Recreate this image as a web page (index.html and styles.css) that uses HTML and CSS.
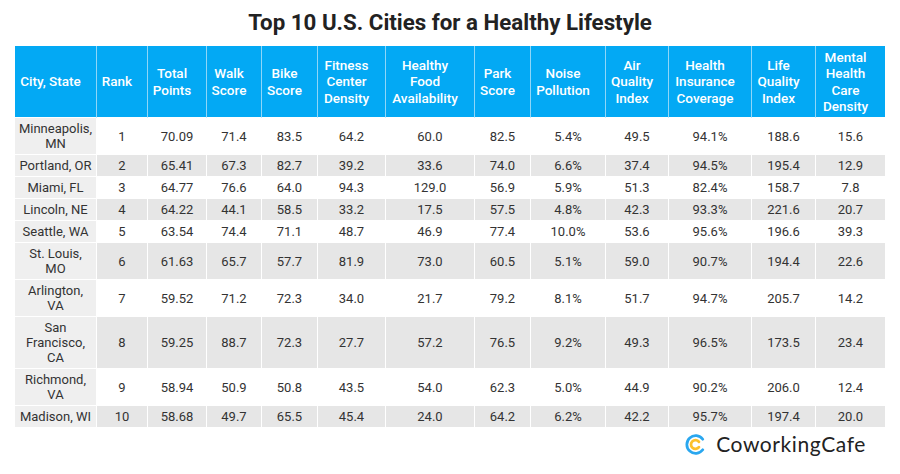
FILE: index.html
```html
<!DOCTYPE html>
<html lang="en">
<head>
<meta charset="utf-8">
<title>Top 10 U.S. Cities for a Healthy Lifestyle</title>
<link rel="stylesheet" href="styles.css">
</head>
<body>
<div class="page">
  <h1 class="title">Top 10 U.S. Cities for a Healthy Lifestyle</h1>
  <table class="data">
    <colgroup>
      <col class="c-city"><col class="c-rank"><col class="c-total"><col class="c-walk"><col class="c-bike"><col class="c-fit"><col class="c-food"><col class="c-park"><col class="c-noise"><col class="c-air"><col class="c-ins"><col class="c-life"><col class="c-mental">
    </colgroup>
    <thead>
      <tr>
        <th>City, State</th><th>Rank</th><th>Total<br>Points</th><th>Walk<br>Score</th><th>Bike<br>Score</th><th>Fitness<br>Center<br>Density</th><th>Healthy<br>Food<br>Availability</th><th>Park<br>Score</th><th>Noise<br>Pollution</th><th>Air<br>Quality<br>Index</th><th>Health<br>Insurance<br>Coverage</th><th>Life<br>Quality<br>Index</th><th>Mental<br>Health<br>Care<br>Density</th>
      </tr>
    </thead>
    <tbody>
      <tr class="odd"><td>Minneapolis,<br>MN</td><td>1</td><td>70.09</td><td>71.4</td><td>83.5</td><td>64.2</td><td>60.0</td><td>82.5</td><td>5.4%</td><td>49.5</td><td>94.1%</td><td>188.6</td><td>15.6</td></tr>
      <tr class="even"><td>Portland, OR</td><td>2</td><td>65.41</td><td>67.3</td><td>82.7</td><td>39.2</td><td>33.6</td><td>74.0</td><td>6.6%</td><td>37.4</td><td>94.5%</td><td>195.4</td><td>12.9</td></tr>
      <tr class="odd"><td>Miami, FL</td><td>3</td><td>64.77</td><td>76.6</td><td>64.0</td><td>94.3</td><td>129.0</td><td>56.9</td><td>5.9%</td><td>51.3</td><td>82.4%</td><td>158.7</td><td>7.8</td></tr>
      <tr class="even"><td>Lincoln, NE</td><td>4</td><td>64.22</td><td>44.1</td><td>58.5</td><td>33.2</td><td>17.5</td><td>57.5</td><td>4.8%</td><td>42.3</td><td>93.3%</td><td>221.6</td><td>20.7</td></tr>
      <tr class="odd"><td>Seattle, WA</td><td>5</td><td>63.54</td><td>74.4</td><td>71.1</td><td>48.7</td><td>46.9</td><td>77.4</td><td>10.0%</td><td>53.6</td><td>95.6%</td><td>196.6</td><td>39.3</td></tr>
      <tr class="even"><td>St. Louis,<br>MO</td><td>6</td><td>61.63</td><td>65.7</td><td>57.7</td><td>81.9</td><td>73.0</td><td>60.5</td><td>5.1%</td><td>59.0</td><td>90.7%</td><td>194.4</td><td>22.6</td></tr>
      <tr class="odd"><td>Arlington,<br>VA</td><td>7</td><td>59.52</td><td>71.2</td><td>72.3</td><td>34.0</td><td>21.7</td><td>79.2</td><td>8.1%</td><td>51.7</td><td>94.7%</td><td>205.7</td><td>14.2</td></tr>
      <tr class="even"><td>San<br>Francisco,<br>CA</td><td>8</td><td>59.25</td><td>88.7</td><td>72.3</td><td>27.7</td><td>57.2</td><td>76.5</td><td>9.2%</td><td>49.3</td><td>96.5%</td><td>173.5</td><td>23.4</td></tr>
      <tr class="odd"><td>Richmond,<br>VA</td><td>9</td><td>58.94</td><td>50.9</td><td>50.8</td><td>43.5</td><td>54.0</td><td>62.3</td><td>5.0%</td><td>44.9</td><td>90.2%</td><td>206.0</td><td>12.4</td></tr>
      <tr class="even"><td>Madison, WI</td><td>10</td><td>58.68</td><td>49.7</td><td>65.5</td><td>45.4</td><td>24.0</td><td>64.2</td><td>6.2%</td><td>42.2</td><td>95.7%</td><td>197.4</td><td>20.0</td></tr>
    </tbody>
  </table>
  <div class="footer">
    <div class="brand">
      <svg class="brand-icon" width="21" height="21" viewBox="0 0 20 20" aria-hidden="true">
        <path d="M16.9 5.0 A8.4 8.4 0 1 0 16.9 15.0" fill="none" stroke="#2aa7ef" stroke-width="2.6" stroke-linecap="round"/>
        <path d="M13.3 7.5 A4.2 4.2 0 1 0 13.3 12.5" fill="none" stroke="#fcc12d" stroke-width="2.6" stroke-linecap="round"/>
      </svg>
      <span class="brand-name">CoworkingCafe</span>
    </div>
  </div>
</div>
</body>
</html>
```

FILE: styles.css
```css
html, body {
  margin: 0;
  padding: 0;
  background: #ffffff;
}

.page {
  width: 900px;
  height: 474px;
  box-sizing: border-box;
  padding: 0 15px;
  font-family: Roboto, "Liberation Sans", sans-serif;
  color: #333333;
}

.title {
  margin: 0;
  height: 46px;
  box-sizing: border-box;
  padding-top: 8px;
  font-size: 22.3px;
  line-height: 28px;
  font-weight: 700;
  text-align: center;
  color: #222222;
}

.data {
  width: 870px;
  table-layout: fixed;
  border-collapse: separate;
  border-spacing: 0;
  font-size: 13px;
}

.c-city { width: 82px; }
.c-rank { width: 51px; }
.c-total { width: 59px; }
.c-walk { width: 55px; }
.c-bike { width: 56px; }
.c-fit { width: 68px; }
.c-food { width: 89px; }
.c-park { width: 56px; }
.c-noise { width: 75px; }
.c-air { width: 63px; }
.c-ins { width: 83px; }
.c-life { width: 64px; }
.c-mental { width: 69px; }

.data th {
  background: #03a9f4;
  color: #ffffff;
  font-size: 13.5px;
  font-weight: 500;
  line-height: 16.5px;
  padding: 2.5px 10px 2.5px 0;
  text-align: center;
  vertical-align: middle;
  height: 66px;
  border-right: 1px solid #8fd6f8;
  border-bottom: 1px solid #ffffff;
  white-space: nowrap;
}

.data th:last-child,
.data td:last-child {
  border-right: none;
}

.data td {
  line-height: 15px;
  padding: 3px 0;
  text-align: center;
  vertical-align: middle;
  border-right: 1px solid #ffffff;
  border-bottom: 1px solid #ffffff;
  white-space: nowrap;
}

.data tr.odd td { background: #ffffff; }
.data tr.even td { background: #e6e6e6; }
.data tr td:first-child { background: #efefef; }

.footer {
  display: flex;
  justify-content: flex-end;
  padding: 5px 19px 0 0;
}

.brand {
  display: flex;
  align-items: center;
  gap: 10px;
}

.brand-icon {
  display: block;
}

.brand-name {
  font-family: "Lato", "Noto Sans", sans-serif;
  font-size: 21px;
  line-height: 22px;
  color: #222222;
  letter-spacing: 0.6px;
}
```
